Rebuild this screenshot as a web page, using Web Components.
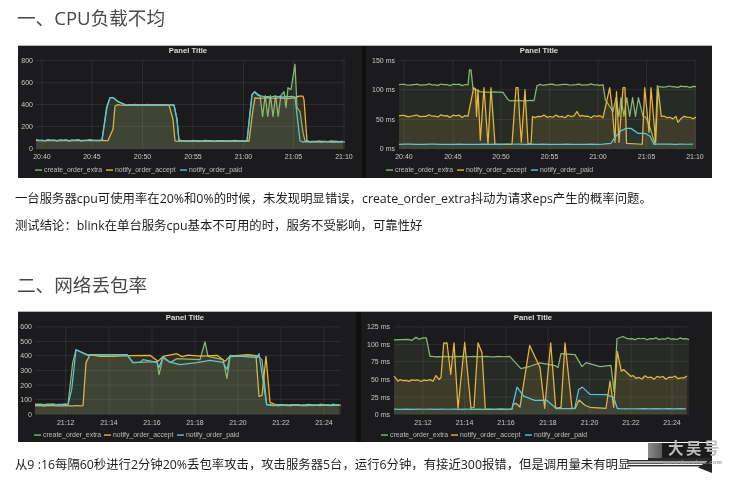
<!DOCTYPE html>
<html>
<head>
<meta charset="utf-8">
<style>
    html, body { margin: 0; background: #fff; }
    body { width: 746px; height: 481px; overflow: hidden; position: relative; }
</style>
</head>
<body>
<report-page>
    <report-section heading="一、CPU负载不均" style="--head-top:5px;--panels-top:14px;--panel-h:133px;--notes-top:7px">
        <panel-row columns="344px 4px 346px">
            <graph-panel chart="cpuRate"></graph-panel>
            <graph-panel chart="cpuLatency"></graph-panel>
        </panel-row>
        <p slot="notes">一台服务器cpu可使用率在20%和0%的时候，未发现明显错误，create_order_extra抖动为请求eps产生的概率问题。</p>
        <p slot="notes">测试结论：blink在单台服务cpu基本不可用的时，服务不受影响，可靠性好</p>
    </report-section>
    <report-section heading="二、网络丢包率" style="--head-top:33px;--panels-top:13px;--panel-h:131px;--notes-top:9px">
        <panel-row columns="338px 5px 351px">
            <graph-panel chart="lossRate"></graph-panel>
            <graph-panel chart="lossLatency"></graph-panel>
        </panel-row>
        <p slot="notes">从9 :16每隔60秒进行2分钟20%丢包率攻击，攻击服务器5台，运行6分钟，有接近300报错，但是调用量未有明显</p>
    </report-section>
</report-page>
<site-watermark></site-watermark>

<script>
const FONT_STACK = '"Open Sans", "Noto Sans CJK SC", sans-serif';
const COLORS = { green: "#86b876", yellow: "#e6b63e", cyan: "#62c4d2" };
const FILLS = { green: 0.1, yellow: 0.12, cyan: 0.07 };

/* small fixed wobble so flat stretches do not look ruled */
function w(x0, x1, y, amp = 0.6, step = 3) {
    const out = [];
    for (let x = x0, i = 0; x <= x1; x += step, i++) {
        out.push(x, +(y + amp * Math.sin(i * 2.3 + x0) * Math.cos(i * 0.9)).toFixed(2));
    }
    return out;
}
function zigzag(x0, x1, step, high, low) {
    const out = [];
    for (let x = x0, i = 0; x <= x1; x += step, i++) {
        out.push(x, i % 2 ? low : high);
    }
    return out;
}

const CHARTS = {
    cpuRate: {
        box: [18, 46, 344, 133], title: 188, titleY: 53,
        plot: [36, 345], top: 60.7, base: 149.5, labelRight: 33,
        yTicks: [["800", 60.7], ["600", 83], ["400", 105], ["200", 127], ["0", 149.5]],
        xTicks: [["20:40", 42], ["20:45", 92], ["20:50", 142.5], ["20:55", 193], ["21:00", 243.5], ["21:05", 293.5], ["21:10", 344]],
        xLabelY: 160,
        legend: { y: 171, items: [[35, 44], [106, 115], [180, 189]] },
        series: {
            green: [...w(36, 104, 141), 107, 108, 110, 98, 113, 98, 118, 102, 125, 105, ...w(126, 175, 105.3), 177, 120, 179, 141, ...w(181, 249, 141.5), 252, 95, 255, 92, 258, 96, ...zigzag(260, 282, 2.6, 96, 117), 284, 92, 286, 108, 288, 88, 291, 90, 295, 64.5, 297, 108, 300, 112, 303, 133, 305, 141.5, ...w(307, 345, 142)],
            yellow: [...w(36, 110, 141.3, .3), 113, 130, 115, 106.5, ...w(118, 171, 105.5, .4), 173, 120, 175, 141.5, ...w(177, 251, 141.8, .2), 253, 110, 255, 98, ...w(258, 296, 98.5, .5), 299, 96.5, 303, 96.5, 304, 100, 307, 141.5, ...w(310, 345, 142.5, .4)],
            cyan: [...w(36, 104, 141, .4), 106.5, 108, 110, 98, 113, 98, 118, 102, 125, 105, ...w(126, 175, 105.5, .4), 177, 120, 179, 141.5, ...w(181, 249, 142, .3), 252, 95, 254, 92.5, 260, 96, ...w(262, 295, 97, .5), 300, 141.5, ...w(303, 345, 142.5, .4)]
        }
    },
    cpuLatency: {
        box: [366, 46, 346, 133], title: 539, titleY: 53,
        plot: [399, 696], top: 60.7, base: 149.5, labelRight: 395,
        yTicks: [["150 ms", 60.7], ["100 ms", 90], ["50 ms", 120], ["0 ms", 149.5]],
        xTicks: [["20:40", 404], ["20:45", 453], ["20:50", 501], ["20:55", 549.6], ["21:00", 598], ["21:05", 646.6], ["21:10", 695]],
        xLabelY: 160,
        legend: { y: 171, items: [[386, 395], [457, 466], [531, 540]] },
        series: {
            green: [...w(399, 468, 85, 1), 469.5, 70, 471, 70, 473, 89, 480, 92, ...w(482, 505, 92.5, .3), 508, 100, ...w(510, 535, 101, .3), 537, 86, ...w(540, 600, 85, 1), 603, 85, 605.3, 100, 613, 112, 616, 98, 619, 117, ...zigzag(621, 640, 2.9, 98, 117), 643, 117, 646, 118, 650, 128, 655, 145, 657.3, 86, ...w(660, 696, 87, 1)],
            yellow: [...w(399, 470, 116.5, 1.6), 473.7, 88, 475.5, 89, 476.5, 117, 478, 90, 480.3, 141, 484, 88, 488, 145, 491, 88, 495, 145, ...w(497, 512, 145, .1, 5), 516, 88, 518, 88, 519.5, 116, 521.3, 143, 525, 90, 528, 144, 531, 145, 532.5, 117, ...w(535, 574, 117, 1.5), 577, 112, 580, 117, ...w(582, 605, 117, 1.5), 609.7, 88, 612, 107, 615, 143, 616.5, 92, 619, 143, 623, 88, 625, 88, 626.5, 144, 642.3, 145, 644.7, 88, 649, 133, 651, 88, 655.7, 143, 658, 88, 661.3, 117, ...w(664, 676, 118, 1.6), 678, 123, ...w(681, 696, 118, 1.8)],
            cyan: [...w(399, 608, 145, .2, 6), 611, 144, 615, 138, 620, 132, 626, 129, 631, 129, 638, 134, 645, 134, 650, 137, 654, 145, ...w(657, 696, 145, .1, 6)]
        }
    },
    lossRate: {
        box: [18, 312, 338, 131], title: 185, titleY: 320,
        plot: [35, 341], top: 327, base: 415, labelRight: 32,
        yTicks: [["600", 327], ["500", 341.7], ["400", 356], ["300", 371], ["200", 385.7], ["100", 400], ["0", 415]],
        xTicks: [["21:12", 65.7], ["21:14", 109], ["21:16", 152], ["21:18", 195], ["21:20", 238], ["21:22", 281], ["21:24", 324]],
        xLabelY: 425.5,
        legend: { y: 436, items: [[34, 43], [104, 113], [177, 186]] },
        series: {
            green: [...w(35, 69, 405, .5), 72.7, 363, 76, 350, 87, 355, 100, 355, 127, 355, 133, 363, 157, 362, 159, 375, 163, 358, 170, 363, 177, 359, 200, 360, 205, 342, 208, 356.7, 223, 360, 227, 379, 230, 357, 257, 356, 262, 360, 266.7, 405, ...w(270, 341, 405.5, .7)],
            yellow: [...w(35, 83, 406.5, .3), 86, 363, 90, 355, 100, 356.7, 112, 356.7, 130, 356, 150, 355.7, 158, 361.7, 163, 356.7, 177, 354, 182, 357, 188, 355.5, 200, 356.5, 217, 355.7, 225, 361.7, 230, 356.5, 248, 355, 256, 356, 259, 397, 262, 396, 266, 356.7, 270, 403, 275, 405, ...w(278, 341, 406, .6)],
            cyan: [...w(35, 69, 405.5, .3), 71.7, 390, 76, 350, 88, 355.7, 127, 355, 133, 363, 140, 362.5, 143, 360, 157, 362.7, 159, 368, 163, 357, 170, 362.5, 180, 365, 197, 363, 210, 360.7, 223, 362.7, 227, 370, 230, 355.7, 257, 358, 259, 354, 266.7, 405.7, ...w(270, 341, 406, .6)]
        }
    },
    lossLatency: {
        box: [361, 312, 351, 131], title: 533, titleY: 320,
        plot: [394, 689], top: 327, base: 415, labelRight: 390,
        yTicks: [["125 ms", 327], ["100 ms", 344.7], ["75 ms", 362], ["50 ms", 380], ["25 ms", 397.7], ["0 ms", 415]],
        xTicks: [["21:12", 423], ["21:14", 464.6], ["21:16", 506], ["21:18", 548], ["21:20", 589.6], ["21:22", 631], ["21:24", 672]],
        xLabelY: 425.5,
        legend: { y: 436, items: [[381, 390], [451, 460], [525, 534]] },
        series: {
            green: [394, 340, 408, 339.5, 412, 340.5, 416, 337.5, 419, 339.5, 423, 338, 426.3, 338, 430, 356.7, ...w(432, 506, 357, .4), 509.7, 356.7, 521, 369, 530, 366.7, 540, 363.3, 555, 366, 558, 368, 561, 354, 575, 355, 582, 367, 586, 363, 600, 367, 611, 365.7, 614, 392, 617, 339, 623, 336.7, ...w(626, 689, 339, 1)],
            yellow: [394, 376.7, 398, 381.7, ...w(400, 433, 381, 1), 436, 376, 439, 380, 441, 378, 443.7, 343.3, 447, 343, 450.7, 375, 454, 343, 458, 409, 464.7, 342.7, 471, 409, 474, 408, 478, 343, 482, 353, 485.3, 410, ...w(488, 512, 410, .1, 6), 513, 405, 516, 404, 520, 407.7, 529.7, 345.7, 540, 368, 544.7, 409, 550.7, 343, 555.7, 409, 561, 408, 565, 343, 572, 409, 575.3, 409, 579, 400.7, 585, 406, 590, 408, 606, 409, 610, 381.7, 613.7, 408, 617.3, 351.7, 621.3, 371.7, 623.7, 370, 631, 377, ...w(633, 689, 378, 2)],
            cyan: [...w(394, 509, 410, .1, 6), 512, 409.5, 517, 387.7, 523.7, 396.7, 534.7, 401, 546.3, 400.7, 556.3, 409.3, 574.7, 409.3, 578.7, 390, 582.3, 387.7, 590, 395, 606, 395.3, 613.7, 398, 617.3, 409.3, ...w(620, 689, 409.5, .1, 6)]
        }
    }
};

class ReportPage extends HTMLElement {
    constructor() {
        super();
        this.attachShadow({ mode: "open" }).innerHTML = `
            <style>
                :host { display: block; width: 746px; font-family: ${FONT_STACK}; }
            </style>
            <slot></slot>`;
    }
}

class ReportSection extends HTMLElement {
    constructor() {
        super();
        this.attachShadow({ mode: "open" }).innerHTML = `
            <style>
                :host { display: block; }
                h2 {
                    margin: var(--head-top, 0) 0 0 17px;
                    font-size: 18.6px;
                    font-weight: 400;
                    line-height: 26px;
                    color: #474747;
                    filter: blur(.3px);
                }
                .panels { margin: var(--panels-top, 0) 0 0 18px; height: var(--panel-h); }
                .notes { margin: var(--notes-top, 6px) 0 0 15px; font-size: 12.37px; color: #1c1c1c; filter: blur(.25px); }
                ::slotted(p) { margin: 0; line-height: 27px; white-space: nowrap; }
            </style>
            <h2></h2>
            <div class="panels"><slot></slot></div>
            <div class="notes"><slot name="notes"></slot></div>`;
    }
    connectedCallback() {
        this.shadowRoot.querySelector("h2").textContent = this.getAttribute("heading");
    }
}

class PanelRow extends HTMLElement {
    constructor() {
        super();
        this.attachShadow({ mode: "open" }).innerHTML = `
            <style>
                :host {
                    display: grid;
                    width: 694px;
                    height: 100%;
                    background: #0f0f10;
                    border-top: 1px solid #b5b5b5;
                    box-sizing: border-box;
                    filter: blur(.4px);
                }
            </style>
            <slot></slot>`;
    }
    connectedCallback() {
        const [left, gap, right] = this.getAttribute("columns").split(" ");
        this.style.gridTemplateColumns = `${left} ${right}`;
        this.style.columnGap = gap;
    }
}

class GraphPanel extends HTMLElement {
    constructor() {
        super();
        this.attachShadow({ mode: "open" }).innerHTML = `
            <style>
                :host { display: block; min-width: 0; background: #1b1b1d; overflow: hidden; }
                svg { display: block; width: 100%; height: 100%; font-family: "Liberation Sans", sans-serif; }
                .grid { stroke: #fff; stroke-opacity: .12; stroke-width: .7; }
                .tick { font-size: 7px; fill: #c8c8c8; }
                .title { font-size: 7.7px; font-weight: 700; fill: #dcdcdc; text-anchor: middle; }
                .legend { font-size: 6.9px; fill: #bcbcbc; }
            </style>
            <div id="plot" style="height:100%"></div>`;
    }
    connectedCallback() {
        const c = CHARTS[this.getAttribute("chart")];
        const names = ["green", "yellow", "cyan"];
        const labels = ["create_order_extra", "notify_order_accept", "notify_order_paid"];
        let s = `<svg viewBox="${c.box.join(" ")}" preserveAspectRatio="none" xmlns="http://www.w3.org/2000/svg">`;
        s += `<text class="title" x="${c.title}" y="${c.titleY}">Panel Title</text>`;
        for (const [label, y] of c.yTicks) {
            s += `<line class="grid" x1="${c.plot[0]}" x2="${c.plot[1]}" y1="${y}" y2="${y}"/>`;
            s += `<text class="tick" x="${c.labelRight}" y="${y + 2.5}" text-anchor="end">${label}</text>`;
        }
        for (const [label, x] of c.xTicks) {
            s += `<line class="grid" x1="${x}" x2="${x}" y1="${c.top}" y2="${c.base}"/>`;
            s += `<text class="tick" x="${x}" y="${c.xLabelY}" text-anchor="middle">${label}</text>`;
        }
        names.forEach((name, i) => {
            const pts = c.series[name];
            const last = pts[pts.length - 2];
            const line = pts.join(" ");
            s += `<polygon points="${pts[0]} ${c.base} ${line} ${last} ${c.base}" fill="${COLORS[name]}" fill-opacity="${FILLS[name]}"/>`;
            s += `<polyline points="${line}" fill="none" stroke="${COLORS[name]}" stroke-width="1.25" stroke-linejoin="round"/>`;
            const [lineX, textX] = c.legend.items[i];
            s += `<line x1="${lineX}" x2="${lineX + 7}" y1="${c.legend.y}" y2="${c.legend.y}" stroke="${COLORS[name]}" stroke-width="1.4"/>`;
            s += `<text class="legend" x="${textX}" y="${c.legend.y + 2.4}">${labels[i]}</text>`;
        });
        this.shadowRoot.getElementById("plot").innerHTML = s + "</svg>";
    }
}

class SiteWatermark extends HTMLElement {
    constructor() {
        super();
        this.attachShadow({ mode: "open" }).innerHTML = `
            <style>
                /* overlay stamped on top of the page, bottom right */
                :host { display: block; position: absolute; left: 620px; top: 430px; width: 126px; height: 51px; filter: blur(.5px); }
                svg { display: block; }
                .name { font: 700 15.5px "Noto Sans CJK SC", sans-serif; fill: #bdbdbd; letter-spacing: 2.4px; }
                .site { font: 700 5.6px "Liberation Sans", sans-serif; fill: #9a9a9a; letter-spacing: .5px; }
            </style>
            <svg width="126" height="51" viewBox="0 0 126 51" xmlns="http://www.w3.org/2000/svg">
                <defs>
                    <linearGradient id="fade" x1="0" x2="1" y1="0" y2="0">
                        <stop offset="0" stop-color="#8c8c8c"/>
                        <stop offset="1" stop-color="#5a5a5a"/>
                    </linearGradient>
                </defs>
                <rect x="28" y="13" width="64" height="15" fill="#1b1b1d"/>
                <rect x="28" y="13" width="14" height="15" fill="url(#fade)"/>
                <rect x="8" y="30" width="84" height="1.4" fill="#2a2a2a"/>
                <rect x="28" y="28" width="64" height="3" fill="#2a2a2a"/>
                <rect x="8" y="32.6" width="80" height="1.2" fill="#333"/>
                <rect x="8" y="35" width="78" height="1.4" fill="#2a2a2a"/>
                <polygon points="78,37.4 92,28 92,43" fill="#222"/>
                <text class="name" x="48" y="24">大吴号</text>
                <text class="site" x="43" y="34">www.dawuhao.com</text>
            </svg>`;
    }
}

customElements.define("report-page", ReportPage);
customElements.define("report-section", ReportSection);
customElements.define("panel-row", PanelRow);
customElements.define("graph-panel", GraphPanel);
customElements.define("site-watermark", SiteWatermark);
</script>
</body>
</html>
